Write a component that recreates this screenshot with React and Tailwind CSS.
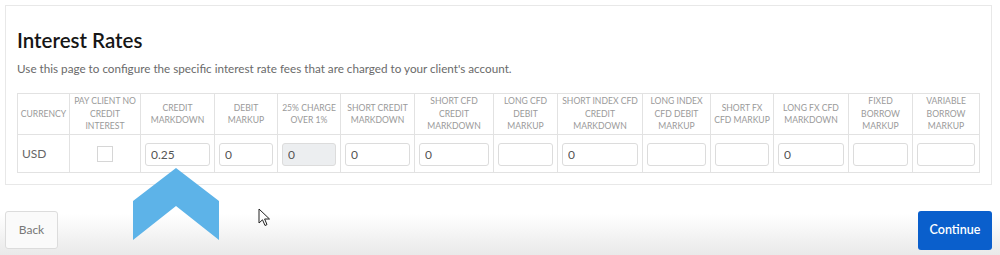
import React from 'react';

const columns = [
  { label: ['CURRENCY'], w: 52 },
  { label: ['PAY CLIENT NO', 'CREDIT', 'INTEREST'], w: 71 },
  { label: ['CREDIT', 'MARKDOWN'], w: 74 },
  { label: ['DEBIT', 'MARKUP'], w: 63 },
  { label: ['25% CHARGE', 'OVER 1%'], w: 63 },
  { label: ['SHORT CREDIT', 'MARKDOWN'], w: 74 },
  { label: ['SHORT CFD', 'CREDIT', 'MARKDOWN'], w: 79 },
  { label: ['LONG CFD', 'DEBIT', 'MARKUP'], w: 64 },
  { label: ['SHORT INDEX CFD', 'CREDIT', 'MARKDOWN'], w: 85 },
  { label: ['LONG INDEX', 'CFD DEBIT', 'MARKUP'], w: 68 },
  { label: ['SHORT FX', 'CFD MARKUP'], w: 63 },
  { label: ['LONG FX CFD', 'MARKDOWN'], w: 75 },
  { label: ['FIXED', 'BORROW', 'MARKUP'], w: 64 },
  { label: ['VARIABLE', 'BORROW', 'MARKUP'], w: 67 },
];

// values for the input cells (index 2 onward)
const values = ['0.25', '0', '0', '0', '0', '', '0', '', '', '0', '', ''];

const RateInput = ({ value, disabled }) => (
  <input
    type="text"
    defaultValue={value}
    disabled={disabled}
    className={
      'w-full h-[23px] rounded-[3px] border border-[#dcdcdc] px-[5px] text-[12px] text-[#555] outline-none ' +
      (disabled ? 'bg-[#eceef0]' : 'bg-white')
    }
  />
);

const App = () => {
  return (
    <div
      className="relative w-[1000px] h-[255px] overflow-hidden bg-gradient-to-b from-white from-[84%] to-[#e9e9e9] pt-[5px] pl-[5px] pr-[8px]"
      style={{ fontFamily: 'Lato, "Open Sans", sans-serif' }}
    >
      {/* Card */}
      <div className="w-[987px] h-[180px] border border-[#e8e8e8] bg-white pl-[11px] pt-[21px]">
        <h1 className="text-[20.5px] leading-[26px] font-semibold text-[#161616]">Interest Rates</h1>
        <p className="mt-[7px] text-[11.7px] leading-[16px] text-[#6a6a6a]">
          Use this page to configure the specific interest rate fees that are charged to your client's account.
        </p>
        <table className="mt-[17px] table-fixed border-collapse w-[962px]">
          <colgroup>
            {columns.map((c) => (
              <col key={c.label.join(' ')} style={{ width: c.w }} />
            ))}
          </colgroup>
          <thead>
            <tr className="h-[41px]">
              {columns.map((c) => (
                <th
                  key={c.label.join(' ')}
                  className="border border-[#e2e2e2] px-0 text-center align-middle text-[8.6px] leading-[12.5px] font-normal text-[#9a9a9a]"
                >
                  {c.label.map((line) => (
                    <div key={line} className="whitespace-nowrap">
                      {line}
                    </div>
                  ))}
                </th>
              ))}
            </tr>
          </thead>
          <tbody>
            <tr className="h-[38px]">
              <td className="border border-[#e2e2e2] pl-[4px] text-[12px] text-[#666]">USD</td>
              <td className="border border-[#e2e2e2]">
                <div className="mx-auto w-[16px] h-[16px] border border-[#d6d6d6] bg-white" />
              </td>
              {values.map((v, i) => (
                <td key={i} className="border border-[#e2e2e2] px-[4px]">
                  <RateInput value={v} disabled={i === 2} />
                </td>
              ))}
            </tr>
          </tbody>
        </table>
      </div>

      {/* Footer buttons */}
      <div className="mt-[26px] flex items-start justify-between">
        <button className="w-[53px] h-[38px] rounded-[3px] border border-[#dcdcdc] bg-[#fafafa] text-[12px] text-[#777]">
          Back
        </button>
        <button className="w-[74px] h-[39px] rounded-[3px] bg-[#0a5fcc] text-[12.5px] font-semibold text-white">
          Continue
        </button>
      </div>

      {/* Blue chevron overlay */}
      <svg className="absolute left-[133px] top-[168px]" width="87" height="73" viewBox="0 0 87 73">
        <polygon points="43,0 86,33 86,72 43,38 0,72 0,33" fill="#5db3e8" />
      </svg>

      {/* Mouse cursor */}
      <svg className="absolute left-[258px] top-[208px]" width="14" height="20" viewBox="0 0 14 20">
        <path
          d="M1 1 L1 15 L4.5 11.8 L7 17.5 L9 16.6 L6.6 11 L11.5 11 Z"
          fill="#fff"
          stroke="#222"
          strokeWidth="1"
          strokeLinejoin="round"
        />
      </svg>
    </div>
  );
};

export default App;
